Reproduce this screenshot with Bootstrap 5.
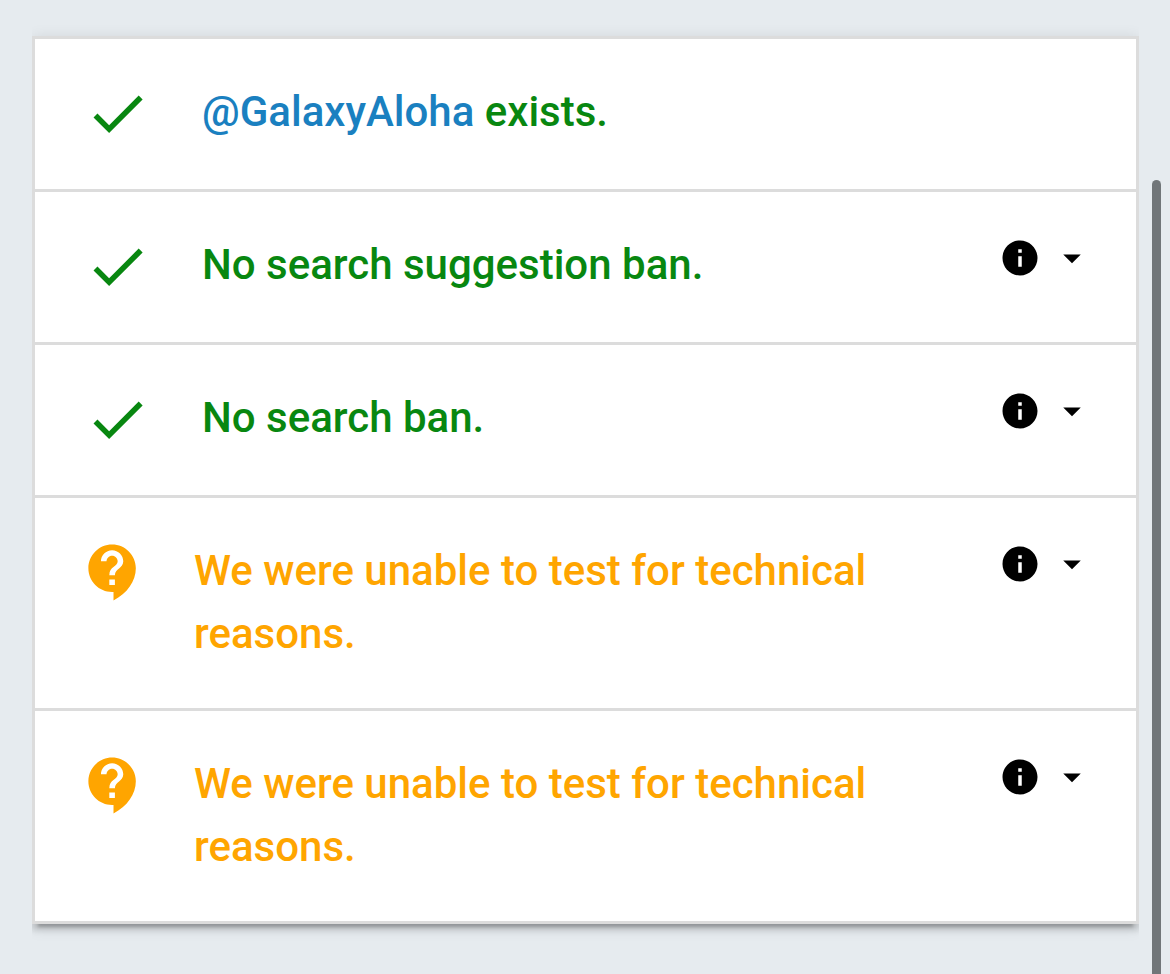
<!DOCTYPE html>
<html lang="en">
<head>
<meta charset="utf-8">
<meta name="viewport" content="width=device-width, initial-scale=1">
<title>Account test results</title>
<link href="https://cdn.jsdelivr.net/npm/bootstrap@5.3.0/dist/css/bootstrap.min.css" rel="stylesheet">
<style>
  body { background: #e6ebef; font-family: Roboto, "Liberation Sans", sans-serif; }
  main { padding: 36px 31px 50px 32px; }
  .results {
    border: 3px solid #dcdcdc;
    background: #fff;
    box-shadow: 0 9px 3px -6px rgba(0,0,0,.2), 0 6px 6px 0 rgba(0,0,0,.14), 0 3px 15px 0 rgba(0,0,0,.12);
    clip-path: inset(-24px 0);
  }
  .result { min-height: 66px; box-sizing: content-box; padding: 41px 43px 43px 49px; color: #088710; }
  .result + .result { border-top: 3px solid #dcdcdc; }
  .result.unknown { padding-left: 45px; color: #ffa500; }
  .status-icon { width: 67px; height: 67px; margin-right: 51px; margin-bottom: -4px; }
  .unknown .status-icon { margin-right: 47px; }
  .result-text { font-size: 42px; line-height: 63px; font-weight: 500; }
  .result-text a { color: #1a80c0; }
  .details { margin-top: 4px; gap: 10px; color: #000; }
  .details svg { width: 42px; height: 42px; }
  .scroll-thumb { top: 180px; bottom: -6px; right: 9px; width: 9px; border-radius: 5px; background: #717679; }
</style>
</head>
<body>
<svg class="d-none" aria-hidden="true">
  <symbol id="check" viewBox="0 0 24 24"><path d="M9 16.17 4.83 12l-1.42 1.41L9 19 21 7l-1.41-1.41z"/></symbol>
  <symbol id="question" viewBox="0 0 24 24"><path d="M11.5 2C6.81 2 3 5.81 3 10.5S6.81 19 11.5 19h.5v3c4.86-2.34 8-7 8-11.5C20 5.81 16.19 2 11.5 2zm1 14.5h-2v-2h2v2zm0-3.5h-2c0-3.25 3-3 3-5 0-1.1-.9-2-2-2s-2 .9-2 2h-2c0-2.21 1.79-4 4-4s4 1.79 4 4c0 2.5-3 2.75-3 5z"/></symbol>
  <symbol id="info" viewBox="0 0 24 24"><path d="M12 2C6.48 2 2 6.48 2 12s4.480 10 10 10 10-4.480 10-10S17.520 2 12 2zm1 15h-2v-6h2v6zm0-8h-2V7h2v2z"/></symbol>
  <symbol id="caret" viewBox="0 0 24 24"><path d="M7 10l5 5 5-5z"/></symbol>
</svg>
<main>
  <ul class="results list-unstyled mb-0">
    <li class="result d-flex align-items-start">
      <svg class="status-icon flex-shrink-0" fill="currentColor" aria-hidden="true"><use href="#check"/></svg>
      <div class="result-text flex-grow-1"><a class="text-decoration-none" href="#">@GalaxyAloha</a> exists.</div>
    </li>
    <li class="result d-flex align-items-start">
      <svg class="status-icon flex-shrink-0" fill="currentColor" aria-hidden="true"><use href="#check"/></svg>
      <div class="result-text flex-grow-1">No search suggestion ban.</div>
      <button type="button" class="details btn p-0 border-0 d-flex flex-shrink-0" aria-label="More information"><svg fill="currentColor"><use href="#info"/></svg><svg fill="currentColor"><use href="#caret"/></svg></button>
    </li>
    <li class="result d-flex align-items-start">
      <svg class="status-icon flex-shrink-0" fill="currentColor" aria-hidden="true"><use href="#check"/></svg>
      <div class="result-text flex-grow-1">No search ban.</div>
      <button type="button" class="details btn p-0 border-0 d-flex flex-shrink-0" aria-label="More information"><svg fill="currentColor"><use href="#info"/></svg><svg fill="currentColor"><use href="#caret"/></svg></button>
    </li>
    <li class="result unknown d-flex align-items-start">
      <svg class="status-icon flex-shrink-0" fill="currentColor" aria-hidden="true"><use href="#question"/></svg>
      <div class="result-text flex-grow-1">We were unable to test for technical reasons.</div>
      <button type="button" class="details btn p-0 border-0 d-flex flex-shrink-0" aria-label="More information"><svg fill="currentColor"><use href="#info"/></svg><svg fill="currentColor"><use href="#caret"/></svg></button>
    </li>
    <li class="result unknown d-flex align-items-start">
      <svg class="status-icon flex-shrink-0" fill="currentColor" aria-hidden="true"><use href="#question"/></svg>
      <div class="result-text flex-grow-1">We were unable to test for technical reasons.</div>
      <button type="button" class="details btn p-0 border-0 d-flex flex-shrink-0" aria-label="More information"><svg fill="currentColor"><use href="#info"/></svg><svg fill="currentColor"><use href="#caret"/></svg></button>
    </li>
  </ul>
</main>
<div class="scroll-thumb position-fixed" aria-hidden="true"></div>
<script src="https://cdn.jsdelivr.net/npm/bootstrap@5.3.0/dist/js/bootstrap.bundle.min.js"></script>
</body>
</html>
